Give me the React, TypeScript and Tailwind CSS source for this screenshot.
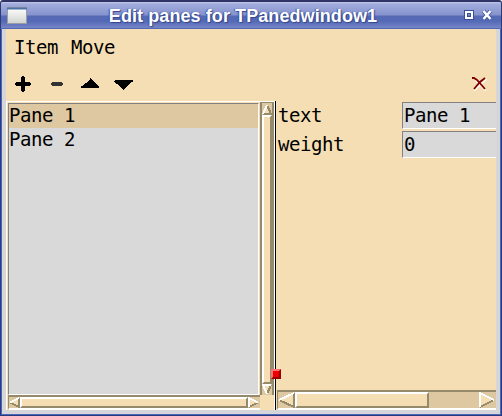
import React from "react";

type Dir = "up" | "down" | "left" | "right";

const HI = "#ffffff";
const LO = "#968a6c";

function Arrow({ dir, w, h, t = 2 }: { dir: Dir; w: number; h: number; t?: number }) {
  const k = t / 2;
  const pts = {
    up: { body: [[k, h - k], [w / 2, k], [w - k, h - k]], light: [[k, h - k], [w / 2, k]], dark: [[w / 2, k], [w - k, h - k], [k, h - k]] },
    down: { body: [[k, k], [w - k, k], [w / 2, h - k]], light: [[w / 2, h - k], [k, k], [w - k, k]], dark: [[w - k, k], [w / 2, h - k]] },
    left: { body: [[w - k, k], [k, h / 2], [w - k, h - k]], light: [[k, h / 2], [w - k, k]], dark: [[w - k, k], [w - k, h - k], [k, h / 2]] },
    right: { body: [[k, k], [w - k, h / 2], [k, h - k]], light: [[k, h - k], [k, k], [w - k, h / 2]], dark: [[w - k, h / 2], [k, h - k]] },
  }[dir];
  const s = (p: number[][]) => p.map((q) => q.join(",")).join(" ");
  return (
    <svg width={w} height={h} className="block shrink-0" shapeRendering="crispEdges" fill="none">
      <polygon points={s(pts.body)} fill="#f5deb3" />
      <polyline points={s(pts.dark)} stroke={LO} strokeWidth={t} />
      <polyline points={s(pts.light)} stroke={HI} strokeWidth={t} />
    </svg>
  );
}

function TitleBar() {
  return (
    <header className="flex h-[29px] shrink-0 items-center rounded-t-[3px] border-x border-t-2 border-b border-x-[#303a70] border-t-[#2e3464] border-b-[#5268b5] bg-[linear-gradient(180deg,#c2c9ea_0px,#a2acdc_2px,#8592cd_13px,#556bb5_14px,#5369b5_19px,#7685c7_26px)] pl-[6px] pr-[9px]">
      <svg width="20" height="17" className="block shrink-0">
        <defs>
          <linearGradient id="pane" x1="0" y1="0" x2="0" y2="1">
            <stop stopColor="#fff" />
            <stop offset="1" stopColor="#d0d3ce" />
          </linearGradient>
        </defs>
        <rect x=".5" y=".5" width="19" height="16" fill="url(#pane)" stroke="#9a9da3" />
        <path d="M0 1.500h20" stroke="#4d72a5" strokeWidth="2" />
      </svg>
      <h1 className="flex-1 pr-1 pt-px text-center font-['Liberation_Sans',sans-serif] text-[18px] leading-[26px] font-bold tracking-[0.08px] whitespace-nowrap text-white [text-shadow:1px_1px_1px_#35478c,-1px_0_1px_#4054a0]">
        Edit panes for TPanedwindow1
      </h1>
      <svg width="29" height="12" className="block shrink-0" fill="none">
        <rect x="3" y="3" width="6" height="6" stroke="#3c4f96" strokeWidth="4" />
        <rect x="3" y="3" width="6" height="6" stroke="#fff" strokeWidth="2" />
        <path d="M20.500 2l7 8m0-8l-7 8" stroke="#3c4f96" strokeWidth="4" />
        <path d="M20.500 2l7 8m0-8l-7 8" stroke="#fff" strokeWidth="2.6" />
      </svg>
    </header>
  );
}

function Toolbar() {
  return (
    <div className="flex h-[36px] items-center pr-[9px] pb-px pl-[9px]">
      <svg width="120" height="16" className="block" shapeRendering="crispEdges">
        <path d="M1 6h5V1h1V0h2v1h1v5h5v1h1v2h-1v1h-5v5H9v1H7v-1H6v-5H1V9H0V7h1z" />
        <path d="M37 6h10v1h1v2h-1v1H37V9h-1V7h1z" fill="#333" />
        <path d="M66 12v-2h2V9h1V8h1V7h2V6h1V5h1V4h1V2h1v1h1v1h1v1h1v1h1v1h1v1h1v1h1v1h1v2z" />
        <path d="M100 4h18v2h-2v1h-1v1h-1v1h-1v1h-1v1h-1v1h-1v1h-1v1h-1v-1h-1v-1h-1v-1h-1v-1h-1V9h-1V8h-2V7h-1V6h-2z" />
      </svg>
      <svg width="15" height="14" className="ml-auto block" fill="none">
        <path d="M3 3l11 11M14.500 2L2 14" stroke="#fff" strokeWidth="1.2" />
        <path d="M0 1h2l3 2 8 9M13 1L8 5l-6 7" stroke="#800000" strokeWidth="1.8" />
      </svg>
    </div>
  );
}

function ListPane() {
  return (
    <section className="flex h-[309px] w-[268px] shrink-0 flex-col border-t border-l border-white pl-px">
      <div className="flex h-[293px]">
        <ul className="mt-px h-[292px] w-[251px] border border-t-[#828282] border-r-white border-b-white border-l-[#828282] bg-[#d9d9d9]">
          <li className="h-[24px] bg-[#dec8a1] leading-[23px]">Pane 1</li>
          <li className="h-[24px] leading-[23px]">Pane 2</li>
        </ul>
        <div className="ml-px flex w-[14px] flex-col items-center border-x-2 border-t border-t-[#968a6c] border-r-[#968a6c] border-l-[#968a6c] bg-[#dec8a1] pt-px">
          <Arrow dir="up" w={10} h={11} />
          <div className="h-[269px] w-[10px] border-2 border-t-white border-r-[#968a6c] border-b-[#968a6c] border-l-white bg-[#f5deb3]" />
          <Arrow dir="down" w={10} h={11} />
        </div>
      </div>
      <div className="flex h-[15px]">
        <div className="flex h-[15px] w-[252px] items-center border-t-2 border-b-2 border-l border-t-[#968a6c] border-b-white border-l-[#968a6c] bg-[#dec8a1]">
          <Arrow dir="left" w={11} h={11} />
          <div className="h-[11px] w-[228px] border-2 border-t-white border-r-[#968a6c] border-b-[#968a6c] border-l-white bg-[#f5deb3]" />
          <Arrow dir="right" w={11} h={11} />
        </div>
      </div>
    </section>
  );
}

function Field({ label, value }: { label: string; value: string }) {
  return (
    <div className="flex h-[29px] items-start">
      <span className="w-[125px] pl-px leading-[26px]">{label}</span>
      <span className="h-[27px] flex-1 border-t border-b border-l border-t-[#828282] border-b-white border-l-[#828282] bg-[#d9d9d9] pl-px leading-[24px]">{value}</span>
    </div>
  );
}

function EditorPane() {
  return (
    <section className="flex h-[309px] flex-1 flex-col">
      <div className="flex-1 pt-px">
        <Field label="text" value="Pane 1" />
        <Field label="weight" value="0" />
      </div>
      <div className="flex h-[20px] items-center border-t-2 border-b-2 border-l border-t-[#968a6c] border-b-white border-l-[#968a6c] bg-[#dec8a1]">
        <Arrow dir="left" w={17} h={16} />
        <div className="h-[16px] w-[134px] border-2 border-t-white border-r-[#968a6c] border-b-[#968a6c] border-l-white bg-[#f5deb3]" />
        <div className="ml-auto pr-px">
          <Arrow dir="right" w={16} h={16} />
        </div>
      </div>
    </section>
  );
}

export default function App() {
  return (
    <div className="flex h-[416px] w-[502px] flex-col bg-white font-['DejaVu_Sans_Mono',monospace] text-[19px] tracking-[-0.44px] text-black">
      <TitleBar />
      <main className="flex-1 border-x border-b border-[#2a3a78]">
        <div className="h-full border-x border-b border-[#4a66c0]">
          <div className="flex h-full flex-col border-x-4 border-b-4 border-[#d6d6d8] bg-[#f5deb3]">
            <nav className="flex h-[37px] items-center gap-[13px] pl-[8px]">
              <span>Item</span>
              <span>Move</span>
            </nav>
            <Toolbar />
            <div className="-mt-px flex">
              <ListPane />
              <div className="relative h-[309px] w-[3px] shrink-0 border-r border-l border-r-[#f5deb3] border-l-white bg-black">
                <div className="absolute top-[268px] -left-[4px] size-[10px] border-2 border-t-[#ff7070] border-r-[#990000] border-b-[#990000] border-l-[#ff7070] bg-[#ee0000]" />
              </div>
              <EditorPane />
            </div>
          </div>
        </div>
      </main>
    </div>
  );
}
